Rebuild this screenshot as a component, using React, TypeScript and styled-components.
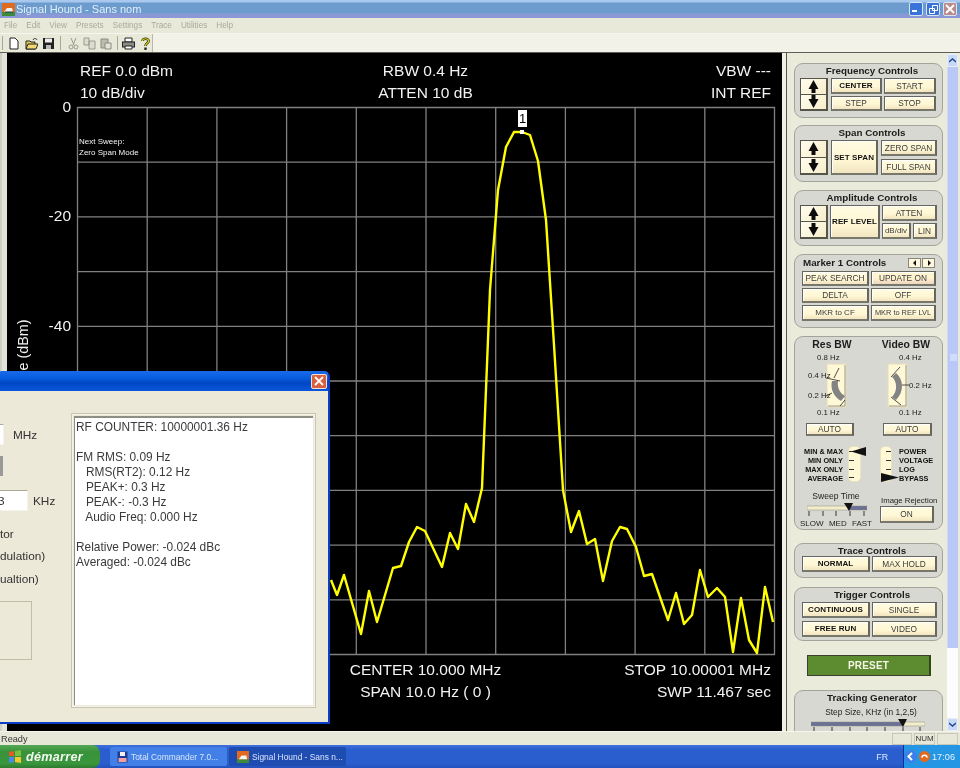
import React from "react";
import styled, { createGlobalStyle } from "styled-components";

const Global = createGlobalStyle`
  html, body { margin: 0; padding: 0; background: #ece9d8; }
  * { box-sizing: border-box; }
  body { font-family: "Liberation Sans", Arial, sans-serif; }
`;

const Screen = styled.div`
  position: relative; width: 960px; height: 768px; overflow: hidden;
  display: flex; flex-direction: column; background: #e8e8d9; filter: blur(0.3px);
`;

/* ---------- window chrome ---------- */
const TitleBar = styled.header`
  height: 18px; flex: none; display: flex; align-items: center; padding: 0 2px;
  background: linear-gradient(#a9c8ee 0, #a9c8ee 2px, #6b9ccd 3px, #6b9ccd 13px, #8a98d8 14px, #8a98d8 18px);
`;
const TitleText = styled.span`
  margin-left: 1px; font: 11px "Liberation Sans", sans-serif; color: #e4eefa; flex: 1;
`;
const WinButtons = styled.div` display: flex; gap: 3px; margin-right: 1px; `;
const WinButton = styled.div<{ $close?: boolean }>`
  width: 14px; height: 14px; border: 1px solid #d8e4f4; border-radius: 2px;
  background: ${(p) => (p.$close ? "#b98a8a" : "#3a74d8")};
  display: flex; align-items: center; justify-content: center;
`;
const MenuBar = styled.nav`
  height: 16px; flex: none; display: flex; align-items: center; gap: 9px; padding-left: 4px;
  background: #e9e9da; border-bottom: 1px solid #f6f6ee;
  font: 8.2px "Liberation Sans", sans-serif; color: #a9a99b;
`;
const ToolBar = styled.div`
  height: 19px; flex: none; display: flex; align-items: center; background: #e9e9da; border-bottom: 1px solid #5e5e58;
`;
const ToolGroup = styled.div`
  width: 153px; height: 100%; display: flex; align-items: center; padding-left: 2px; border-right: 1px solid #b9b9aa;
`;
const ToolSep = styled.span<{ $l: number; $r: number }>`
  width: 1px; height: 14px; background: #a8a89a; margin: 0 ${(p) => p.$r}px 0 ${(p) => p.$l}px;
`;
const ToolIcon = styled.svg<{ $after: number }>` width: 13px; height: 13px; margin-right: ${(p) => p.$after}px; flex: none; `;
const ToolFill = styled.div` flex: 1; height: 100%; background: #f2f2e8; `;

/* ---------- main ---------- */
const Main = styled.main` flex: 1; min-height: 0; display: flex; `;
const LeftEdge = styled.div`
  width: 7px; flex: none; background: #e4e4d6; border-left: 2px solid #cfcfc4;
`;

const Plot = styled.section`
  width: 775px; flex: none; background: #000; color: #f2f2f2;
  display: grid; grid-template-columns: 70px 697px 8px; grid-template-rows: 54px 547px 1fr;
  font: 15.5px "Liberation Sans", sans-serif;
`;
const PlotHeader = styled.div`
  grid-column: 2; display: grid; grid-template-columns: 1fr 1fr 1fr; padding: 7px 3px 0 3px; line-height: 22px;
`;
const HeaderCol = styled.div<{ $align: string }>` text-align: ${(p) => p.$align}; white-space: nowrap; `;
const AxisCol = styled.div`
  position: relative; grid-column: 1; display: flex; flex-direction: column; align-items: flex-end; padding-right: 6px;
`;
const AxisTick = styled.div` height: 109.4px; line-height: 16px; margin-top: -8px; margin-bottom: 8px; `;
const AxisName = styled.div`
  position: absolute; left: 16px; top: 266px; transform: translate(-50%, -50%) rotate(-90deg); white-space: nowrap; font-size: 14.4px;
`;
const ChartWrap = styled.div` position: relative; grid-column: 2; width: 697px; height: 547px; `;
const ChartSvg = styled.svg` display: block; overflow: visible; `;
const SweepNote = styled.div`
  position: absolute; left: 2px; top: 29px; font: 8px/11px "Liberation Sans", sans-serif; color: #f4f4f4;
`;
const MarkerTag = styled.div`
  position: absolute; left: 441px; top: 3px; width: 9px; height: 17px; background: #fff; color: #000;
  font: 13px/17px "Liberation Sans", sans-serif; text-align: center;
`;
const MarkerDot = styled.div`
  position: absolute; left: 443px; top: 23px; width: 4px; height: 4px; background: #fff;
`;
const PlotFooter = styled.div`
  grid-column: 2; display: grid; grid-template-columns: 1fr 1fr 1fr; padding: 5px 3px 0 3px; line-height: 22px;
`;

/* ---------- side panel ---------- */
const Divider = styled.div`
  width: 5px; flex: none; background: #f0f0e4; border-right: 1px solid #55554e;
`;
const Side = styled.aside`
  flex: 1; min-width: 0; display: flex; background: #ebebdc; overflow: hidden; height: 678px;
`;
const Controls = styled.div` width: 160px; padding: 10px 0 0 7px; flex: none; `;
const Group = styled.section<{ $after?: number; $h?: number }>`
  width: 149px; margin-bottom: ${(p) => p.$after ?? 8}px; padding: 0 5px 6px;
  height: ${(p) => (p.$h ? `${p.$h}px` : "auto")};
  background: #d8d8d2; border: 1px solid #a4a49c; border-radius: 9px; color: #1c1c1c;
`;
const GroupTitle = styled.h3<{ $h?: number }>`
  margin: 0; padding-left: 7px; height: ${(p) => p.$h ?? 14}px; text-align: center;
  font: bold 9.8px/14px "Liberation Sans", sans-serif; white-space: nowrap;
`;
const ControlRow = styled.div<{ $gap?: number }>` display: flex; gap: ${(p) => p.$gap ?? 3}px; `;
const Spinner = styled.div<{ $h: number }>`
  width: 28px; height: ${(p) => p.$h}px; flex: none; display: flex; flex-direction: column;
  border: 1px solid #55554c; border-right-width: 2px; border-bottom-width: 2px;
`;
const SpinHalf = styled.div`
  flex: 1; display: flex; align-items: center; justify-content: center; background: linear-gradient(135deg, #fffdf0, #f6edc8);
  border-bottom: 1px solid #55554c; &:last-child { border-bottom: 0; }
`;
const BtnGrid = styled.div<{ $cols: string; $rows: string; $gap?: string }>`
  display: grid; grid-template-columns: ${(p) => p.$cols}; grid-template-rows: ${(p) => p.$rows}; gap: ${(p) => p.$gap ?? "2px"};
`;
const Btn = styled.button<{ $bold?: boolean; $pressed?: boolean; $w?: number; $h?: number; $wide?: boolean; $fs?: number }>`
  all: unset; box-sizing: border-box; display: flex; align-items: center; justify-content: center; white-space: nowrap;
  width: ${(p) => (p.$w ? `${p.$w}px` : "auto")}; height: ${(p) => (p.$h ? `${p.$h}px` : "auto")};
  grid-column: ${(p) => (p.$wide ? "1 / -1" : "auto")};
  background: ${(p) => (p.$pressed ? "linear-gradient(#fff4d0, #fff4d0 50%, #eed4c0)" : "linear-gradient(#fffbe0, #fff7d4 60%, #f2e4c0)")};
  border: 1px solid #66665c; border-right: 2px solid #66665c; border-bottom: 2px solid #77776c;
  box-shadow: inset 1px 1px 0 #fff;
  font: ${(p) => (p.$bold ? "bold" : "normal")} ${(p) => p.$fs ?? (p.$bold ? 8 : 8.3)}px "Liberation Sans", sans-serif;
  letter-spacing: ${(p) => (p.$bold ? 0.1 : 0)}px;
  color: ${(p) => (p.$bold ? "#111" : "#3a3a3a")};
`;
const MarkerHead = styled.div` display: flex; align-items: flex-start; height: 15px; padding-left: 3px; `;
const MarkerTitle = styled.h3` margin: 0; flex: 1; font: bold 9.8px/15px "Liberation Sans", sans-serif; white-space: nowrap; `;
const MiniArrows = styled.div` display: flex; gap: 1px; margin: 3px 2px 0 0; `;
const MiniArrow = styled.div`
  width: 13px; height: 10px; background: #fff8dc; border: 1px solid #85857a;
  display: flex; align-items: center; justify-content: center;
`;
const ButtonPairs = styled(BtnGrid)` margin: 1px 0 0 2px; `;
const TraceGrid = styled(BtnGrid)` margin-left: 2px; `;

const BwGrid = styled.div` display: grid; grid-template-columns: 74px 74px; margin: 0 -5px; `;
const BwBlock = styled.div` display: flex; flex-direction: column; `;
const BwTitle = styled.h3`
  margin: 0; height: 15px; text-align: center; font: bold 10.4px/15px "Liberation Sans", sans-serif; white-space: nowrap;
`;
const Tiny = styled.div<{ $indent?: number }>`
  height: 12px; margin-left: ${(p) => p.$indent ?? 0}px; font: 7.8px/12px "Liberation Sans", sans-serif; color: #222; white-space: nowrap;
`;
const KnobRow = styled.div<{ $indent: number }>` display: flex; height: 43px; margin-left: ${(p) => p.$indent}px; `;
const SideLabels = styled.div<{ $w: number; $pt: number; $gap: number }>`
  position: relative; z-index: 1;
  width: ${(p) => p.$w}px; padding-top: ${(p) => p.$pt}px; display: flex; flex-direction: column; gap: ${(p) => p.$gap}px;
`;
const Knob = styled.svg` width: 19px; height: 43px; flex: none; display: block; overflow: visible; `;
const AutoWrap = styled.div<{ $indent: number }>` margin: 4px 0 0 ${(p) => p.$indent}px; `;

const SelectorGrid = styled.div` display: grid; grid-template-columns: 74px 74px; margin: 10px -5px 0; height: 37px; `;
const SelectorBox = styled.div` display: flex; `;
const SelLabels = styled.div<{ $left?: boolean; $w: number; $ml: number }>`
  width: ${(p) => p.$w}px; margin-left: ${(p) => p.$ml}px; padding-top: 1px; text-align: ${(p) => (p.$left ? "left" : "right")};
  font: bold 7.3px/9px "Liberation Sans", sans-serif; color: #111; white-space: nowrap;
`;
const SelStrip = styled.div<{ $ml: number; $w: number }>`
  position: relative; flex: none; width: ${(p) => p.$w}px; margin-left: ${(p) => p.$ml}px; height: 36px;
  background: #fff8d4; border-radius: 5px; border: 1px solid #ece4c0;
  display: flex; flex-direction: column; padding-top: 4px; gap: 7.8px;
`;
const SelTick = styled.i<{ $ml: number }>` display: block; width: 5px; height: 1px; background: #333; margin-left: ${(p) => p.$ml}px; `;
const SelPointer = styled.svg<{ $l: number; $t: number }>`
  position: absolute; left: ${(p) => p.$l}px; top: ${(p) => p.$t}px; overflow: visible;
`;

const BottomRow = styled.div` display: grid; grid-template-columns: 85px 63px; margin: 7px -5px 0; `;
const SweepBlock = styled.div` display: flex; flex-direction: column; padding-left: 5px; `;
const SweepName = styled.div` text-align: center; font: 8.6px/13px "Liberation Sans", sans-serif; color: #222; width: 72px; `;
const SweepScale = styled.div`
  display: flex; width: 72px; margin-top: 1px; justify-content: space-between; font: 8px/11px "Liberation Sans", sans-serif; color: #222;
`;
const Slider = styled.svg<{ $ml: number }>` display: block; margin-left: ${(p) => p.$ml}px; flex: none; `;
const RejectBlock = styled.div` display: flex; flex-direction: column; padding-top: 5px; `;
const RejectName = styled.div` font: 7.8px/11px "Liberation Sans", sans-serif; color: #222; white-space: nowrap; padding-left: 1px; height: 11px; `;

const Preset = styled.button`
  all: unset; box-sizing: border-box; display: flex; align-items: center; justify-content: center;
  width: 124px; height: 21px; margin: 0 0 14px 13px; background: #5d8b30; border: 1px solid #3e3e32; border-right: 2px solid #2f4a18;
  color: #f4f4e8; font: bold 10px "Liberation Sans", sans-serif; letter-spacing: 0.2px;
`;
const StepLabel = styled.div` text-align: center; padding-left: 5px; font: 8.4px/13px "Liberation Sans", sans-serif; color: #222; margin-top: 1px; `;

const Scrollbar = styled.div` width: 11px; margin: 1px 0 0 0; flex: none; display: flex; flex-direction: column; height: 677px; `;
const ScrollArrow = styled.div`
  height: 13px; flex: none; background: #c8d8f8; border: 1px solid #e8eefc; border-radius: 2px;
  display: flex; align-items: center; justify-content: center;
`;
const ScrollThumb = styled.div`
  height: 581px; flex: none; background: #b9c8f6; border-left: 1px solid #cdd8fa; display: flex; align-items: center; justify-content: center;
`;
const Grip = styled.i` display: block; width: 7px; height: 7px; background: #d0dcfa; `;
const ScrollTrack = styled.div` flex: 1; background: #fcfcff; `;

/* ---------- status + task bar ---------- */
const StatusBar = styled.footer`
  height: 14px; flex: none; display: flex; align-items: center; background: #e8e8d9; border-top: 1px solid #f6f6ee; padding-left: 1px;
  font: 9.2px "Liberation Sans", sans-serif; color: #333;
`;
const StatusText = styled.span` flex: 1; `;
const StatusPane = styled.span<{ $w: number }>`
  width: ${(p) => p.$w}px; height: 12px; margin-right: 2px; border: 1px solid #c8c8b8; text-align: center; font-size: 8px; line-height: 10px;
`;
const TaskBar = styled.div`
  height: 23px; flex: none; display: flex; align-items: center; background: linear-gradient(#3f70dc, #2a5ecf 20%, #2a5ecf 80%, #2352bc);
`;
const Start = styled.div`
  width: 100px; height: 23px; flex: none; display: flex; align-items: center; gap: 3px; padding-left: 8px;
  background: linear-gradient(#55a855, #38923a 30%, #3a963c 80%, #2d7a30); border-radius: 0 8px 8px 0; margin-right: 10px;
  color: #f4f8f0; font: italic bold 12.6px "Liberation Sans", sans-serif; letter-spacing: 0.3px;
`;
const TaskBtn = styled.div<{ $active?: boolean }>`
  width: 117px; height: 19px; flex: none; margin-right: 2px; display: flex; align-items: center; gap: 3px; padding-left: ${(p) => (p.$active ? 8 : 7)}px;
  background: ${(p) => (p.$active ? "#1f4cb0" : "#4280e8")}; border-radius: 2px; color: #d8e4fa; overflow: hidden; white-space: nowrap;
  font: 8.4px "Liberation Sans", sans-serif;
`;
const TaskSpacer = styled.div` flex: 1; `;
const Lang = styled.span` color: #e0e8fa; font: 8.8px "Liberation Sans", sans-serif; margin-right: 15px; `;
const Tray = styled.div`
  width: 57px; height: 23px; flex: none; display: flex; align-items: center; background: #2596e4; gap: 2px;
  color: #e4f0fc; font: 9.2px "Liberation Sans", sans-serif; border-left: 1px solid #102f9a;
`;
const TrayIcon = styled.svg<{ $s: number }>` width: ${(p) => p.$s}px; height: ${(p) => p.$s}px; flex: none; `;

/* ---------- floating dialog ---------- */
const Dialog = styled.div`
  position: absolute; left: -3px; top: 371px; width: 333px; height: 353px; display: flex; flex-direction: column;
  background: #0a3fc4; border-radius: 6px 6px 0 0; padding: 0 2px 2px 0; overflow: hidden;
`;
const DialogTitle = styled.div`
  height: 20px; flex: none; display: flex; justify-content: flex-end; align-items: center; padding-right: 1px;
  background: linear-gradient(#1a6ae8, #0a5fe2 30%, #0047c4 60%, #0a56da);
`;
const DialogClose = styled.div`
  width: 16px; height: 15px; border: 1px solid #f0e0d8; border-radius: 2px; background: #d9603c;
  display: flex; align-items: center; justify-content: center;
`;
const DialogBody = styled.div` flex: 1; display: flex; background: #ece9d8; padding-left: 3px; `;
const DialogForm = styled.div` width: 71px; flex: none; font: 11.8px "Liberation Sans", sans-serif; color: #333; overflow: hidden; `;
const FieldRow = styled.div<{ $top: number }>` display: flex; align-items: center; margin-top: ${(p) => p.$top}px; white-space: nowrap; `;
const FieldInput = styled.div<{ $w: number; $h: number; $mr: number }>`
  width: ${(p) => p.$w}px; height: ${(p) => p.$h}px; margin-right: ${(p) => p.$mr}px; background: #fff; text-indent: -2px;
  border-top: 1px solid #aaa99a; border-right: 1px solid #f4f4ec; border-bottom: 1px solid #f4f4ec; line-height: 20px; flex: none;
`;
const GrayChip = styled.div` width: 3px; height: 20px; margin-top: 11px; background: #999; `;
const FormLine = styled.div<{ $top: number }>` margin-top: ${(p) => p.$top}px; line-height: 14px; white-space: nowrap; `;
const FormBox = styled.div` width: 32px; height: 59px; margin-top: 15px; border: 1px solid #c0bea8; border-left: 0; `;
const ListFrame = styled.div`
  width: 245px; height: 295px; margin-top: 22px; flex: none; padding: 1px; background: #ece9d8; border: 1px solid #c8c6b2;
  box-shadow: inset 0 0 0 1px #f6f4ea;
`;
const ListBox = styled.pre`
  margin: 1px; height: 289px; background: #fff; border-top: 2px solid #8e8e84; border-left: 1px solid #8e8e84;
  padding: 2px 0 0 1px; font: 11.9px/15px "Liberation Sans", sans-serif; color: #3a3a3a; overflow: hidden;
`;

/* ---------- data ---------- */
const TRACE: [number, number][] = [
  [331,580],[337,595],[344,575],[361,634],[369,591],[377,622],[385,595],[393,568],[401,566],[409,542],[417,527],[425,531],
  [442,567],[450,533],[458,549],[466,504],[474,522],[482,488],[490,290],[498,190],[506,147],[514,132],[522,132],[530,135],
  [538,161],[546,220],[554,345],[563,490],[571,532],[579,511],[587,544],[595,539],[603,581],[612,541],[620,527],[627,529],
  [636,547],[644,576],[652,574],[668,620],[676,593],[684,624],[692,615],[700,570],[708,597],[717,588],[725,597],[733,652],
  [741,598],[749,640],[757,653],[765,587],[773,622],
];
const Y_TICKS = ["0", "-20", "-40", "-60", "-80"];
const OX = 77, OY = 107, CW = 697, CH = 547;

const Chart = () => (
  <ChartSvg width={CW + 1} height={CH + 1} viewBox={`0 0 ${CW + 1} ${CH + 1}`}>
    {Array.from({ length: 11 }, (_, i) => (
      <line key={`v${i}`} x1={(i * CW) / 10 + 0.5} x2={(i * CW) / 10 + 0.5} y1={0} y2={CH + 1} stroke="#808080" strokeWidth={1.3} />
    ))}
    {Array.from({ length: 11 }, (_, i) => (
      <line key={`h${i}`} y1={(i * CH) / 10 + 0.5} y2={(i * CH) / 10 + 0.5} x1={0} x2={CW + 1} stroke="#808080" strokeWidth={1.3} />
    ))}
    <polyline
      points={TRACE.map(([x, y]) => `${x - OX},${y - OY}`).join(" ")}
      fill="none" stroke="#ffff00" strokeWidth={2.4} strokeLinejoin="round"
    />
  </ChartSvg>
);

const Arrow = ({ up }: { up?: boolean }) => (
  <svg width={11} height={13} viewBox="0 0 11 13">
    <path d={up ? "M5.5 0 L10.5 9 H7.5 V13 H3.5 V9 H.5 Z" : "M5.5 13 L10.5 4 H7.5 V0 H3.5 V4 H.5 Z"} fill="#0c0c0c" />
  </svg>
);
const Spin = ({ h }: { h: number }) => (
  <Spinner $h={h}>
    <SpinHalf><Arrow up /></SpinHalf>
    <SpinHalf><Arrow /></SpinHalf>
  </Spinner>
);

const ResKnob = () => (
  <Knob viewBox="0 0 19 43">
    <rect x={0} y={0} width={19} height={43} fill="#fff8d6" stroke="#e6dcb8" />
    <path d="M18 1v41M1 42h17" stroke="#9a9a8a" fill="none" />
    <path d="M5 17 C3 25 7 33 14 37 L18 32 C13 29 10 24 11 17 Z" fill="#838383" />
    <path d="M12 4 L7 14 M-1 14 L13 17 M-1 32 L5 29 M18 36 L13 42" stroke="#222" strokeWidth={0.8} fill="none" />
  </Knob>
);
const VideoKnob = () => (
  <Knob viewBox="0 0 19 43">
    <rect x={0} y={0} width={19} height={43} fill="#fff8d6" stroke="#e6dcb8" />
    <path d="M18 1v41M1 42h17" stroke="#9a9a8a" fill="none" />
    <path d="M4 13 C9 17 10 27 4 33 L8 36 C16 28 16 16 8 9 Z" fill="#838383" />
    <path d="M12 3 L3 13 M14 21 H21 M3 33 L13 41" stroke="#222" strokeWidth={0.8} fill="none" />
  </Knob>
);

const TinyBar = ({ w, split, ticks, leftBlue, ml }: { w: number; split: number; ticks: number[]; leftBlue?: boolean; ml: number }) => (
  <Slider $ml={ml} width={w} height={14} viewBox={`0 0 ${w} 14`}>
    <rect x={0} y={3} width={split} height={4} fill={leftBlue ? "#6b7096" : "#f2edca"} stroke="#8a8a78" strokeWidth={0.5} />
    <rect x={split} y={3} width={w - split} height={4} fill={leftBlue ? "#f2edca" : "#6b7096"} stroke="#8a8a78" strokeWidth={0.5} />
    {ticks.map((t) => <line key={t} x1={t} x2={t} y1={8} y2={13} stroke="#333" />)}
    <path d={`M${split - 5} 0 H${split + 4} L${split} 8 Z`} fill="#111" />
  </Slider>
);

const Doc = () => <path d="M2 1h5l3 3v8H2z" fill="#fff" stroke="#222" />;

export default function App() {
  return (
    <Screen>
      <Global />
      <TitleBar>
        <svg width="13" height="13" viewBox="0 0 13 13">
          <rect width="13" height="13" fill="#e06a1e" />
          <rect y="9" width="13" height="4" fill="#3d8a3a" />
          <path d="M2 9 L5 5 H10 L11 9 Z" fill="#f4f4f4" />
          <path d="M3 9 h8" stroke="#333" />
        </svg>
        <TitleText>Signal Hound - Sans nom</TitleText>
        <WinButtons>
          <WinButton><svg width="8" height="8"><rect x="0" y="5" width="5" height="2" fill="#fff" /></svg></WinButton>
          <WinButton><svg width="9" height="9"><path d="M3.5 .5h5v5h-5zM.5 3.5h5v5h-5z" fill="none" stroke="#fff" /></svg></WinButton>
          <WinButton $close><svg width="10" height="10"><path d="M1 1l8 8M9 1l-8 8" stroke="#fff" strokeWidth="2" /></svg></WinButton>
        </WinButtons>
      </TitleBar>
      <MenuBar>
        {["File", "Edit", "View", "Presets", "Settings", "Trace", "Utilities", "Help"].map((m) => <span key={m}>{m}</span>)}
      </MenuBar>
      <ToolBar>
        <ToolGroup>
          <ToolSep $l={0} $r={5} />
          <ToolIcon $after={4} viewBox="0 0 13 13"><Doc /></ToolIcon>
          <ToolIcon $after={4} viewBox="0 0 13 13">
            <path d="M1 4h4l1 1h4v7H1z" fill="#e8c85a" stroke="#222" /><path d="M3 7h10l-2 5H1z" fill="#f4d870" stroke="#222" /><path d="M8 3 C9 1 11 1 12 3" stroke="#222" fill="none" />
          </ToolIcon>
          <ToolIcon $after={4} viewBox="0 0 13 13">
            <rect x="1" y="1" width="11" height="11" fill="#222" /><rect x="3" y="1.5" width="7" height="4" fill="#eee" /><rect x="4" y="8" width="5" height="4" fill="#bbb" />
          </ToolIcon>
          <ToolSep $l={1} $r={7} />
          <ToolIcon $after={3} viewBox="0 0 13 13">
            <path d="M4 1l3 7M9 1L6 8" stroke="#9a9a90" fill="none" /><circle cx="4" cy="10" r="2" fill="none" stroke="#9a9a90" /><circle cx="9" cy="10" r="2" fill="none" stroke="#9a9a90" />
          </ToolIcon>
          <ToolIcon $after={3} viewBox="0 0 13 13">
            <path d="M1 1h5v7H1zM6 4h6v8H6z" fill="#dcdcd0" stroke="#9a9a90" />
          </ToolIcon>
          <ToolIcon $after={3} viewBox="0 0 13 13">
            <path d="M2 2h7v9H2z" fill="#bcbcb0" stroke="#8a8a80" /><path d="M6 6h6v6H6z" fill="#e4e4d8" stroke="#8a8a80" />
          </ToolIcon>
          <ToolSep $l={2} $r={4} />
          <ToolIcon $after={4} viewBox="0 0 13 13">
            <path d="M3 1h7v4H3z" fill="#fff" stroke="#222" /><rect x="0.5" y="5" width="12" height="5" fill="#8c8c84" stroke="#222" /><path d="M3 9h7v3H3z" fill="#fff" stroke="#222" />
          </ToolIcon>
          <ToolIcon $after={0} viewBox="0 0 13 13">
            <path d="M3.5 4C3.5 1 9.5 1 9.5 4 C9.5 6.5 6.5 6 6.5 9" fill="none" stroke="#222" strokeWidth="2.6" />
            <path d="M3.5 4C3.5 1 9.5 1 9.5 4 C9.5 6.5 6.5 6 6.5 9" fill="none" stroke="#e8e000" strokeWidth="1.2" />
            <rect x="5.3" y="10.5" width="2.4" height="2.4" fill="#222" />
          </ToolIcon>
        </ToolGroup>
        <ToolFill />
      </ToolBar>

      <Main>
        <LeftEdge />
        <Plot>
          <PlotHeader>
            <HeaderCol $align="left">REF 0.0 dBm<br />10 dB/div</HeaderCol>
            <HeaderCol $align="center">RBW 0.4 Hz<br />ATTEN 10 dB</HeaderCol>
            <HeaderCol $align="right">VBW ---<br />INT REF</HeaderCol>
          </PlotHeader>
          <AxisCol>
            {Y_TICKS.map((t) => <AxisTick key={t}>{t}</AxisTick>)}
            <AxisName>Amplitude (dBm)</AxisName>
          </AxisCol>
          <ChartWrap>
            <Chart />
            <SweepNote>Next Sweep:<br />Zero Span Mode</SweepNote>
            <MarkerTag>1</MarkerTag>
            <MarkerDot />
          </ChartWrap>
          <PlotFooter>
            <div />
            <HeaderCol $align="center">CENTER 10.000 MHz<br />SPAN 10.0 Hz ( 0 )</HeaderCol>
            <HeaderCol $align="right">STOP 10.00001 MHz<br />SWP 11.467 sec</HeaderCol>
          </PlotFooter>
        </Plot>
        <Divider />

        <Side>
          <Controls>
            <Group $after={7}>
              <GroupTitle>Frequency Controls</GroupTitle>
              <ControlRow>
                <Spin h={33} />
                <BtnGrid $cols="51px 52px" $rows="16px 15px">
                  <Btn $bold>CENTER</Btn><Btn>START</Btn>
                  <Btn>STEP</Btn><Btn>STOP</Btn>
                </BtnGrid>
              </ControlRow>
            </Group>
            <Group $after={8} $h={57}>
              <GroupTitle>Span Controls</GroupTitle>
              <ControlRow>
                <Spin h={35} />
                <Btn $bold $w={47} $h={35}>SET SPAN</Btn>
                <BtnGrid $cols="56px" $rows="16px 16px" $gap="3px">
                  <Btn>ZERO SPAN</Btn>
                  <Btn>FULL SPAN</Btn>
                </BtnGrid>
              </ControlRow>
            </Group>
            <Group $after={8}>
              <GroupTitle>Amplitude Controls</GroupTitle>
              <ControlRow $gap={2}>
                <Spin h={34} />
                <Btn $bold $w={50} $h={34}>REF LEVEL</Btn>
                <BtnGrid $cols="29px 24px" $rows="16px 16px">
                  <Btn $wide>ATTEN</Btn>
                  <Btn $fs={8}>dB/div</Btn><Btn>LIN</Btn>
                </BtnGrid>
              </ControlRow>
            </Group>
            <Group $after={8}>
              <MarkerHead>
                <MarkerTitle>Marker 1 Controls</MarkerTitle>
                <MiniArrows>
                  <MiniArrow><svg width="4" height="6"><path d="M3 0v6L0 3z" fill="#111" /></svg></MiniArrow>
                  <MiniArrow><svg width="4" height="6"><path d="M1 0v6l3-3z" fill="#111" /></svg></MiniArrow>
                </MiniArrows>
              </MarkerHead>
              <ButtonPairs $cols="67px 65px" $rows="15px 15px 16px">
                <Btn>PEAK SEARCH</Btn><Btn $pressed>UPDATE ON</Btn>
                <Btn>DELTA</Btn><Btn>OFF</Btn>
                <Btn $fs={8}>MKR to CF</Btn><Btn $fs={7.4}>MKR to REF LVL</Btn>
              </ButtonPairs>
            </Group>
            <Group $after={13} $h={194}>
              <BwGrid>
                <BwBlock>
                  <BwTitle>Res BW</BwTitle>
                  <Tiny $indent={22}>0.8 Hz</Tiny>
                  <KnobRow $indent={13}>
                    <SideLabels $w={19} $pt={6} $gap={8}>
                      <Tiny>0.4 Hz</Tiny>
                      <Tiny>0.2 Hz</Tiny>
                    </SideLabels>
                    <ResKnob />
                  </KnobRow>
                  <Tiny $indent={22}>0.1 Hz</Tiny>
                  <AutoWrap $indent={11}><Btn $w={48} $h={13}>AUTO</Btn></AutoWrap>
                </BwBlock>
                <BwBlock>
                  <BwTitle>Video BW</BwTitle>
                  <Tiny $indent={30}>0.4 Hz</Tiny>
                  <KnobRow $indent={19}>
                    <VideoKnob />
                    <SideLabels $w={22} $pt={16} $gap={0}>
                      <Tiny $indent={2}>0.2 Hz</Tiny>
                    </SideLabels>
                  </KnobRow>
                  <Tiny $indent={30}>0.1 Hz</Tiny>
                  <AutoWrap $indent={14}><Btn $w={49} $h={13}>AUTO</Btn></AutoWrap>
                </BwBlock>
              </BwGrid>
              <SelectorGrid>
                <SelectorBox>
                  <SelLabels $w={39} $ml={9}>MIN &amp; MAX<br />MIN ONLY<br />MAX ONLY<br />AVERAGE</SelLabels>
                  <SelStrip $ml={5} $w={13}>
                    {[0, 1, 2, 3].map((i) => <SelTick key={i} $ml={0} />)}
                    <SelPointer $l={2} $t={0} width="15" height="9"><path d="M0 4.5L15 0v9z" fill="#111" /></SelPointer>
                  </SelStrip>
                </SelectorBox>
                <SelectorBox>
                  <SelStrip $ml={11} $w={12}>
                    {[0, 1, 2, 3].map((i) => <SelTick key={i} $ml={5} />)}
                    <SelPointer $l={0} $t={26} width="18" height="9"><path d="M18 4.5L0 0v9z" fill="#111" /></SelPointer>
                  </SelStrip>
                  <SelLabels $left $w={40} $ml={7}>POWER<br />VOLTAGE<br />LOG<br />BYPASS</SelLabels>
                </SelectorBox>
              </SelectorGrid>
              <BottomRow>
                <SweepBlock>
                  <SweepName>Sweep Time</SweepName>
                  <TinyBar ml={7} w={60} split={42} ticks={[2, 16, 29, 43, 57]} />
                  <SweepScale><span>SLOW</span><span>MED</span><span>FAST</span></SweepScale>
                </SweepBlock>
                <RejectBlock>
                  <RejectName>Image Rejection</RejectName>
                  <Btn $w={54} $h={17}>ON</Btn>
                </RejectBlock>
              </BottomRow>
            </Group>
            <Group $after={9} $h={35}>
              <GroupTitle $h={12}>Trace Controls</GroupTitle>
              <TraceGrid $cols="68px 65px" $rows="16px">
                <Btn $bold>NORMAL</Btn><Btn>MAX HOLD</Btn>
              </TraceGrid>
            </Group>
            <Group $after={14} $h={54}>
              <GroupTitle>Trigger Controls</GroupTitle>
              <TraceGrid $cols="68px 65px" $rows="16px 16px" $gap="3px 2px">
                <Btn $bold>CONTINUOUS</Btn><Btn>SINGLE</Btn>
                <Btn $bold>FREE RUN</Btn><Btn>VIDEO</Btn>
              </TraceGrid>
            </Group>
            <Preset>PRESET</Preset>
            <Group $h={80}>
              <GroupTitle>Tracking Generator</GroupTitle>
              <StepLabel>Step Size, KHz (in 1,2,5)</StepLabel>
              <TinyBar ml={11} w={114} split={92} leftBlue ticks={[3, 21, 39, 56, 74, 92, 109]} />
            </Group>
          </Controls>
          <Scrollbar>
            <ScrollArrow><svg width="7" height="5"><path d="M0 4l3.5-3L7 4" fill="none" stroke="#24468c" strokeWidth="1.4" /></svg></ScrollArrow>
            <ScrollThumb><Grip /></ScrollThumb>
            <ScrollTrack />
            <ScrollArrow><svg width="7" height="5"><path d="M0 1l3.5 3L7 1" fill="none" stroke="#24468c" strokeWidth="1.4" /></svg></ScrollArrow>
          </Scrollbar>
        </Side>
      </Main>

      <StatusBar>
        <StatusText>Ready</StatusText>
        <StatusPane $w={20} />
        <StatusPane $w={21}>NUM</StatusPane>
        <StatusPane $w={21} />
      </StatusBar>
      <TaskBar>
        <Start>
          <svg width="15" height="14" viewBox="0 0 15 14">
            <path d="M1 2l5-1v5H1z" fill="#e8582a" /><path d="M7 1l6-1v6H7z" fill="#7ac040" />
            <path d="M1 7h5v5l-5 1z" fill="#4a8ae8" /><path d="M7 7h6v6l-6-1z" fill="#f4c82c" />
          </svg>
          démarrer
        </Start>
        <TaskBtn>
          <svg width="11" height="12" viewBox="0 0 11 12"><rect x=".5" y=".5" width="10" height="11" fill="#1c3c98" /><rect x="3" y="1" width="5" height="4" fill="#f0f0f0" /><rect x="1.5" y="7" width="8" height="4" fill="#f0a0a0" /></svg>
          Total Commander 7.0...
        </TaskBtn>
        <TaskBtn $active>
          <svg width="12" height="12" viewBox="0 0 13 13"><rect width="13" height="13" fill="#e06a1e" /><rect y="9" width="13" height="4" fill="#3d8a3a" /><path d="M2 9 L5 5 H10 L11 9 Z" fill="#f4f4f4" /></svg>
          Signal Hound - Sans n...
        </TaskBtn>
        <TaskSpacer />
        <Lang>FR</Lang>
        <Tray>
          <TrayIcon $s={13} viewBox="0 0 13 13"><circle cx="6.5" cy="6.5" r="6.5" fill="#3a80e8" /><path d="M8 3L4.5 6.5 8 10" fill="none" stroke="#fff" strokeWidth="2" /></TrayIcon>
          <TrayIcon $s={11} viewBox="0 0 13 13"><circle cx="6.5" cy="6.5" r="6.5" fill="#e06a20" /><path d="M3.5 8a3 3 0 1 1 6 0" fill="none" stroke="#fff" strokeWidth="1.6" /></TrayIcon>
          17:06
        </Tray>
      </TaskBar>

      <Dialog>
        <DialogTitle>
          <DialogClose><svg width="10" height="10"><path d="M1 1l8 8M9 1l-8 8" stroke="#fff" strokeWidth="1.8" /></svg></DialogClose>
        </DialogTitle>
        <DialogBody>
          <DialogForm>
            <FieldRow $top={33}><FieldInput $w={4} $h={21} $mr={9} />MHz</FieldRow>
            <GrayChip />
            <FieldRow $top={14}><FieldInput $w={28} $h={21} $mr={5}>3</FieldInput>KHz</FieldRow>
            <FormLine $top={16}>tor</FormLine>
            <FormLine $top={8}>dulation)</FormLine>
            <FormLine $top={9}>ualtion)</FormLine>
            <FormBox />
          </DialogForm>
          <ListFrame>
            <ListBox>{`RF COUNTER: 10000001.36 Hz

FM RMS: 0.09 Hz
   RMS(RT2): 0.12 Hz
   PEAK+: 0.3 Hz
   PEAK-: -0.3 Hz
   Audio Freq: 0.000 Hz

Relative Power: -0.024 dBc
Averaged: -0.024 dBc`}</ListBox>
          </ListFrame>
        </DialogBody>
      </Dialog>
    </Screen>
  );
}
